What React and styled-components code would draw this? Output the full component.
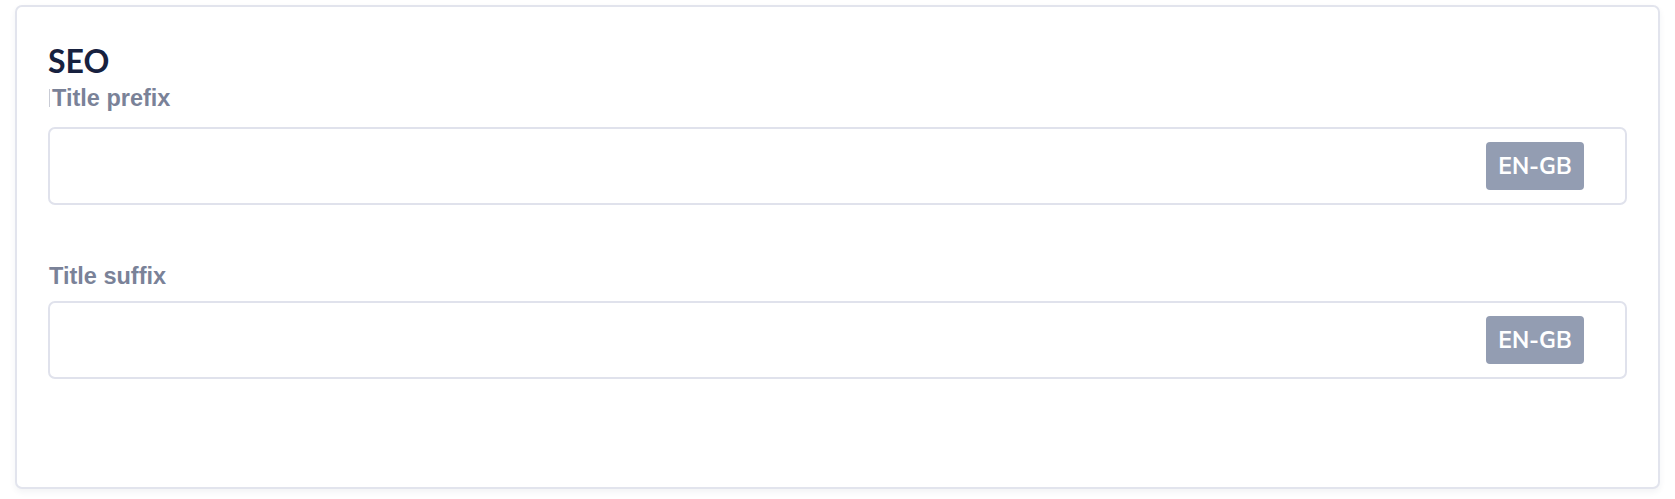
import React from 'react'
import styled, { createGlobalStyle } from 'styled-components'

const GlobalStyle = createGlobalStyle`
    html, body {
        margin: 0;
        padding: 0;
        background: #ffffff;
    }
`

function LocaleField({ label, locale, caret }) {
    return (
        <Field>
            <Label $caret={caret}>
                { caret && <Caret /> }
                { label }
            </Label>
            <InputBox>
                <Input type="text" />
                <Badge>{ locale }</Badge>
            </InputBox>
        </Field>
    )
}

function App() {
    return (
        <Page>
            <GlobalStyle />
            <Card>
                <Heading>SEO</Heading>
                <Fields>
                    <LocaleField label="Title prefix" locale="EN-GB" caret />
                    <LocaleField label="Title suffix" locale="EN-GB" />
                </Fields>
            </Card>
        </Page>
    )
}

export default App


const Page = styled.div`
    width: 1675px;
    height: 499px;
    padding: 5px 15px 0 15px;
    box-sizing: border-box;
`

const Card = styled.section`
    box-sizing: border-box;
    width: 1645px;
    height: 484px;
    border: 2px solid #e2e4ed;
    border-radius: 7px;
    background: #fff;
    box-shadow: 0 3px 6px rgba(40, 50, 90, 0.06);
    padding: 36px 31px 0 31px;
`

const Heading = styled.h2`
    margin: 0 0 5px 0;
    font-family: 'Lato', 'Liberation Sans', sans-serif;
    font-weight: 700;
    font-size: 32px;
    line-height: 35px;
    color: #17213f;
`

const Fields = styled.div`
    display: flex;
    flex-direction: column;
    gap: 56px;
`

const Field = styled.div`
    display: flex;
    flex-direction: column;
`

const Label = styled.label`
    display: flex;
    align-items: center;
    padding-left: 1px;
    height: 30px;
    font-family: 'Liberation Sans', Arial, sans-serif;
    font-weight: 700;
    font-size: 23.5px;
    color: #7a8298;
    margin-bottom: ${props => props.$caret ? '14px' : '10px'};
`

const Caret = styled.span`
    display: inline-block;
    width: 1px;
    height: 18px;
    background: #c9ccd6;
    margin-right: 2px;
`

const InputBox = styled.div`
    box-sizing: border-box;
    display: flex;
    align-items: center;
    height: 78px;
    border: 2px solid #e0e2ec;
    border-radius: 7px;
    padding: 0 41px 0 16px;
`

const Input = styled.input`
    flex: 1;
    border: none;
    outline: none;
    background: transparent;
    font-family: 'Lato', sans-serif;
    font-size: 20px;
`

const Badge = styled.span`
    display: flex;
    align-items: center;
    justify-content: center;
    width: 98px;
    height: 48px;
    border-radius: 4px;
    background: #939db2;
    color: #fff;
    font-family: 'Nunito Sans', 'Lato', sans-serif;
    font-weight: 700;
    font-size: 23px;
`
